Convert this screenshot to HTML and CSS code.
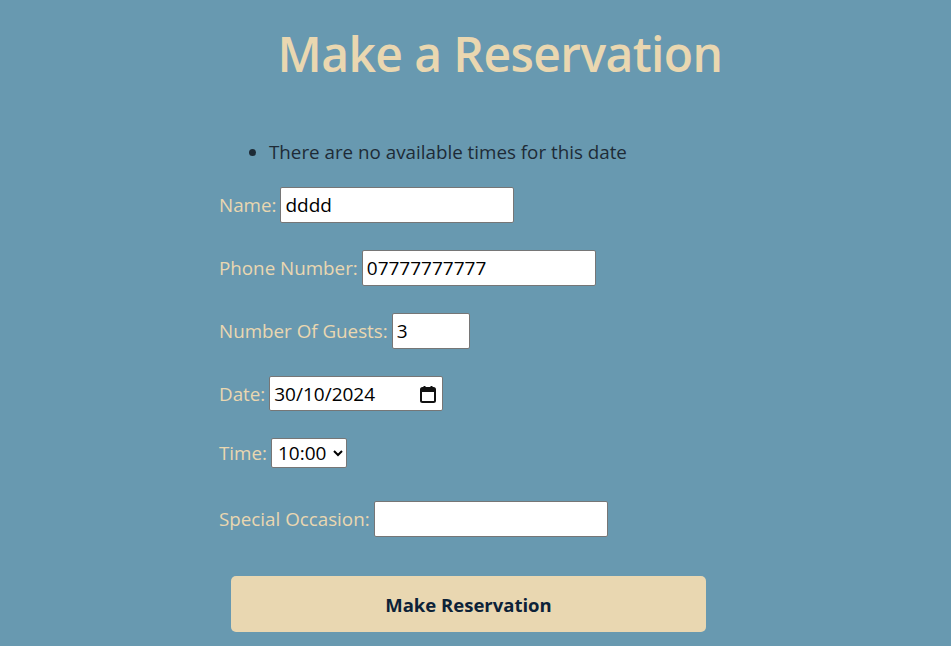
FILE: index.html
```html
<!DOCTYPE html>
<html lang="en">
<head>
<meta charset="utf-8">
<title>Make a Reservation</title>
<link rel="stylesheet" href="styles.css">
</head>
<body>
<main class="page">
  <h1 class="title">Make a Reservation</h1>
  <form class="form">
    <ul class="errors">
      <li>There are no available times for this date</li>
    </ul>
    <div class="row">
      <label class="label" for="name">Name:</label>
      <input class="field field-wide" id="name" type="text" value="dddd">
    </div>
    <div class="row">
      <label class="label" for="phone">Phone Number:</label>
      <input class="field field-wide" id="phone" type="text" value="07777777777">
    </div>
    <div class="row">
      <label class="label" for="guests">Number Of Guests:</label>
      <input class="field field-small" id="guests" type="text" value="3">
    </div>
    <div class="row">
      <label class="label" for="date">Date:</label>
      <span class="date-box">
        <input class="date-input" id="date" type="text" value="30/10/2024">
        <svg class="cal-icon" width="16" height="18" viewBox="0 0 16 18" aria-hidden="true">
          <rect x="1" y="3" width="14" height="14" rx="1.5" fill="none" stroke="#111" stroke-width="2"/>
          <rect x="1" y="3" width="14" height="4" fill="#111"/>
          <rect x="3.5" y="1" width="2" height="3" fill="#111"/>
          <rect x="10.5" y="1" width="2" height="3" fill="#111"/>
        </svg>
      </span>
    </div>
    <div class="row row-time">
      <label class="label" for="time">Time:</label>
      <select class="select" id="time">
        <option>10:00</option>
      </select>
    </div>
    <div class="row">
      <label class="label" for="occasion">Special Occasion:</label>
      <input class="field field-wide" id="occasion" type="text" value="">
    </div>
    <button class="submit" type="button">Make Reservation</button>
  </form>
</main>
</body>
</html>
```
FILE: styles.css
```css
html, body {
  margin: 0;
  padding: 0;
}
body {
  background: #6899b0;
  font-family: "Open Sans", "Noto Sans", sans-serif;
  height: 646px;
  overflow: hidden;
}
.page {
  display: flex;
  flex-direction: column;
}
.title {
  margin: 19px 0 0 49px;
  text-align: center;
  color: #ead7b0;
  font-size: 48px;
  letter-spacing: -0.6px;
  font-weight: 600;
  line-height: 70px;
}
.form {
  margin: 50px 0 0 219px;
  display: flex;
  flex-direction: column;
  align-items: flex-start;
}
.errors {
  margin: 0 0 12px;
  padding-left: 50px;
  color: #1e2b36;
  font-size: 18.8px;
  line-height: 26px;
}
.row {
  margin-top: 10px;
  height: 53px;
  display: flex;
  align-items: baseline;
  gap: 4px;
}
.row-time {
  margin-top: 9px;
}
.label {
  color: #ead7b0;
  font-size: 18.8px;
}
.field {
  box-sizing: border-box;
  height: 36px;
  border: 1px solid #767676;
  border-radius: 2px;
  background: #fff;
  padding: 1px 4px;
  font-family: inherit;
  font-size: 19px;
  color: #000;
}
.field-wide { width: 234px; }
.field-small { width: 78px; }
.date-box {
  box-sizing: border-box;
  width: 174px;
  height: 35px;
  display: inline-flex;
  align-items: center;
  border: 1px solid #767676;
  border-radius: 2px;
  background: #fff;
  padding: 0 6px 0 4px;
}
.date-input {
  border: 0;
  padding: 0;
  width: 140px;
  font-family: inherit;
  font-size: 19px;
  color: #000;
  outline: none;
}
.cal-icon { flex: none; margin-left: auto; }
.select {
  box-sizing: border-box;
  height: 30px;
  width: 76px;
  border: 1px solid #767676;
  border-radius: 2px;
  background: #fff;
  font-family: inherit;
  font-size: 19px;
  color: #000;
  padding: 0 0 0 2px;
}
.submit {
  margin: 22px 0 0 12px;
  width: 475px;
  height: 56px;
  border: 0;
  border-radius: 5px;
  background: #e9d7b1;
  color: #0c2238;
  font-family: inherit;
  font-size: 18.5px;
  font-weight: 700;
}
```
